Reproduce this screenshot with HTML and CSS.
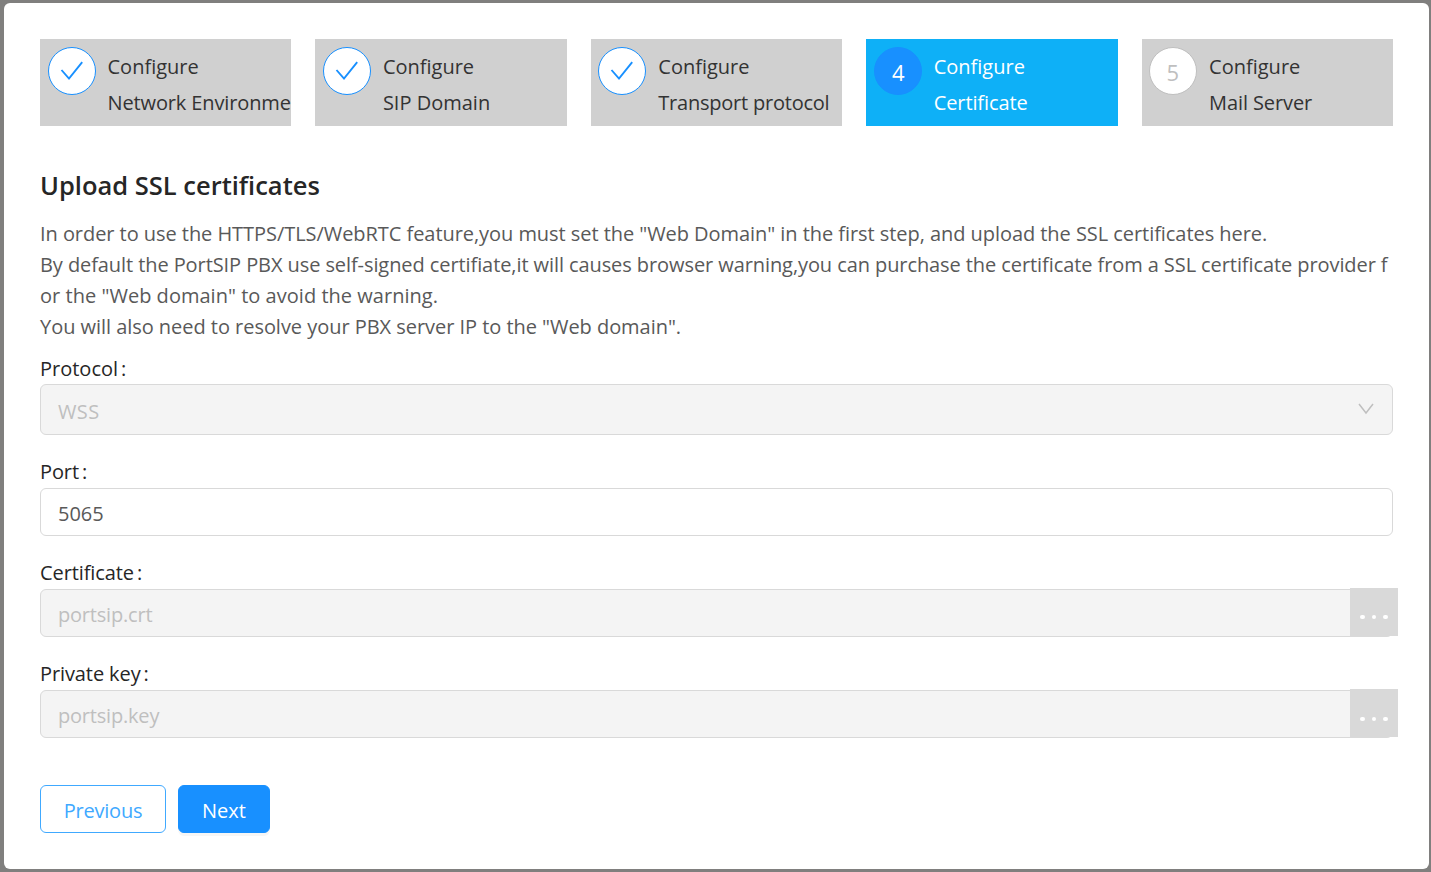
FILE: index.html
```html
<!DOCTYPE html>
<html lang="en">
<head>
<meta charset="utf-8">
<title>Upload SSL certificates</title>
<link rel="stylesheet" href="styles.css">
</head>
<body>
<main class="modal">
  <ol class="steps">
    <li class="step">
      <span class="badge done"><svg class="check" viewBox="0 0 24 24"><path d="M1.5 11L9 19.6L22.2 3.2"/></svg></span>
      <div class="step-text"><span>Configure</span><span class="t-network">Network Environme</span></div>
    </li>
    <li class="step">
      <span class="badge done"><svg class="check" viewBox="0 0 24 24"><path d="M1.5 11L9 19.6L22.2 3.2"/></svg></span>
      <div class="step-text"><span>Configure</span><span class="t-sip">SIP Domain</span></div>
    </li>
    <li class="step shifted">
      <span class="badge done"><svg class="check" viewBox="0 0 24 24"><path d="M1.5 11L9 19.6L22.2 3.2"/></svg></span>
      <div class="step-text"><span>Configure</span><span class="t-transport">Transport protocol</span></div>
    </li>
    <li class="step active">
      <span class="badge current">4</span>
      <div class="step-text"><span>Configure</span><span class="t-cert">Certificate</span></div>
    </li>
    <li class="step shifted">
      <span class="badge waiting">5</span>
      <div class="step-text"><span>Configure</span><span class="t-mail">Mail Server</span></div>
    </li>
  </ol>

  <h1 class="title">Upload SSL certificates</h1>
  <p class="intro">
    <span class="line l1">In order to use the HTTPS/TLS/WebRTC feature,you must set the "Web Domain" in the first step, and upload the SSL certificates here.</span>
    <span class="line l2">By default the PortSIP PBX use self-signed certifiate,it will causes browser warning,you can purchase the certificate from a SSL certificate provider f</span>
    <span class="line l3">or the "Web domain" to avoid the warning.</span>
    <span class="line l4">You will also need to resolve your PBX server IP to the "Web domain".</span>
  </p>

  <form class="form">
    <div class="field">
      <label class="label first">Protocol<span class="colon">:</span></label>
      <div class="control select disabled"><span class="t-select">WSS</span><svg class="arrow" viewBox="0 0 16 12"><path d="M1 1L8 10L15 1"/></svg></div>
    </div>
    <div class="field">
      <label class="label">Port<span class="colon">:</span></label>
      <div class="control"><span class="t-port">5065</span></div>
    </div>
    <div class="field">
      <label class="label">Certificate<span class="colon">:</span></label>
      <div class="control disabled"><span class="t-file">portsip.crt</span>
        <span class="browse"><i></i><i></i><i></i></span></div>
    </div>
    <div class="field">
      <label class="label">Private key<span class="colon">:</span></label>
      <div class="control disabled"><span class="t-file">portsip.key</span>
        <span class="browse low"><i></i><i></i><i></i></span></div>
    </div>
    <div class="actions">
      <button type="button" class="btn ghost">Previous</button>
      <button type="button" class="btn primary">Next</button>
    </div>
  </form>
</main>
</body>
</html>
```
FILE: styles.css
```css
* { box-sizing: border-box; }
body {
  margin: 0;
  height: 872px;
  padding: 3px 2px 3px 4px;
  background: #807f7e;
  overflow: hidden;
  font-family: "Open Sans", "Noto Sans", sans-serif;
  font-size: 20px;
  font-weight: 400;
  color: #595959;
}
.modal {
  height: 866px;
  padding: 36px;
  background: #fff;
  border-radius: 6px;
}
.steps {
  display: grid;
  grid-template-columns: repeat(5, 1fr);
  gap: 24px;
  margin: 0;
  padding: 0;
  list-style: none;
}
.step {
  display: flex;
  gap: 11.5px;
  height: 87px;
  padding: 8px 0 0 8px;
  overflow: hidden;
  background: #d0d0d0;
  color: #333;
  min-width: 0;
}
.step.shifted { padding-left: 7.2px; gap: 12.3px; }
.step.active { background: #0eb0f7; color: #fff; }
.badge {
  flex: none;
  display: flex;
  align-items: center;
  justify-content: center;
  width: 48px;
  height: 48px;
  border: 1px solid #1890ff;
  border-radius: 50%;
  background: #fff;
  font-size: 23px;
}
.badge.current { background: #1890ff; color: #fff; font-size: 22px; padding-top: 2px; }
.badge.waiting { border-color: #bfbfbf; color: #bfbfbf; font-size: 22px; padding-top: 2px; }
.check { width: 24px; height: 24px; fill: none; stroke: #1890ff; stroke-width: 1.9; }
.step-text {
  display: flex;
  flex-direction: column;
  padding-top: 2px;
  line-height: 36px;
  white-space: nowrap;
}
.t-network { letter-spacing: -.13px; }
.t-transport { letter-spacing: -.22px; }
.t-cert, .t-mail { letter-spacing: -.1px; }
.title {
  margin: 43px 0 17px;
  font-size: 25.5px;
  line-height: 32px;
  font-weight: 600;
  color: #262626;
  white-space: nowrap;
}
.intro { margin: 0 0 12px; line-height: 31px; }
.line { display: block; white-space: nowrap; }
.l1 { letter-spacing: -.053px; }
.l2 { letter-spacing: -.083px; }
.l3 { letter-spacing: .025px; }
.l4 { letter-spacing: -.04px; }
.form { display: flex; flex-direction: column; gap: 23px; }
.label { display: block; height: 30px; line-height: 28px; color: #262626; letter-spacing: -.1px; }
.label.first { line-height: 30px; letter-spacing: 0; }
.colon { margin-left: 3px; }
.control {
  position: relative;
  display: flex;
  align-items: center;
  height: 48px;
  padding: 3px 17px 0;
  border: 1px solid #d9d9d9;
  border-radius: 6px;
}
.select { height: 51px; justify-content: space-between; }
.t-select { letter-spacing: .4px; }
.t-file { letter-spacing: -.2px; }
.disabled { background: #f4f4f4; color: #bfbfbf; }
.arrow { width: 16px; height: 12px; margin: -5px 1px 0 0; fill: none; stroke: #bfbfbf; stroke-width: 1.5; }
.browse {
  position: absolute;
  top: -2px;
  right: -6px;
  display: flex;
  justify-content: center;
  gap: 7px;
  width: 48px;
  height: 48px;
  padding-top: 27px;
  background: #d9d9d9;
}
.browse.low { padding-top: 28px; }
.browse i { width: 4.4px; height: 4.4px; border-radius: 50%; background: #fff; }
.actions { display: flex; gap: 12px; margin-top: 24px; }
.btn {
  height: 48px;
  padding: 3px 0 0;
  border: 1px solid #1890ff;
  border-radius: 6px;
  font: inherit;
}
.ghost { width: 126px; background: #fff; border-color: #40a9ff; color: #40a9ff; letter-spacing: -.2px; }
.primary { width: 92px; background: #1890ff; color: #fff; box-shadow: 0 3px 0 rgba(0, 0, 0, .035); }
```
